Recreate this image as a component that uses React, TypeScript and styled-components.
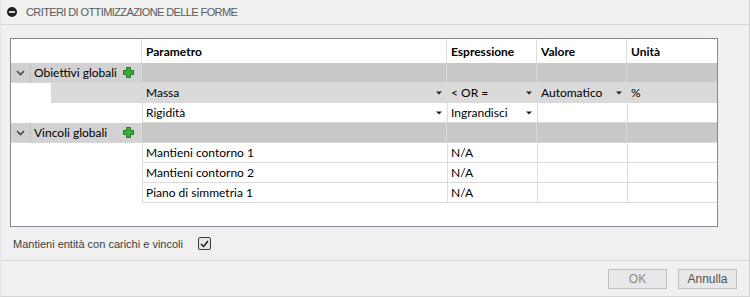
import styled, { createGlobalStyle } from "styled-components";

const GlobalStyles = createGlobalStyle`
  *{
    margin: 0;
    padding: 0;
    box-sizing: border-box;
  }
  body{
    background: #f0f0f0;
  }
`;

const COLS = "131px 305px 90px 90px 90px";

type Cell = { text?: string; drop?: boolean };
type Row = {
  kind: "group" | "child";
  label?: string;
  cells?: Cell[];
  selected?: boolean;
  indent?: boolean;
};

const rows: Row[] = [
  { kind: "group", label: "Obiettivi globali" },
  {
    kind: "child",
    selected: true,
    indent: true,
    cells: [
      { text: "Massa", drop: true },
      { text: "< OR =", drop: true },
      { text: "Automatico", drop: true },
      { text: "%" },
    ],
  },
  {
    kind: "child",
    cells: [
      { text: "Rigidità", drop: true },
      { text: "Ingrandisci", drop: true },
      {},
      {},
    ],
  },
  { kind: "group", label: "Vincoli globali" },
  { kind: "child", cells: [{ text: "Mantieni contorno 1" }, { text: "N/A" }, {}, {}] },
  { kind: "child", cells: [{ text: "Mantieni contorno 2" }, { text: "N/A" }, {}, {}] },
  { kind: "child", cells: [{ text: "Piano di simmetria 1" }, { text: "N/A" }, {}, {}] },
];

function Chevron() {
  return (
    <svg width="9" height="6" viewBox="0 0 9 6">
      <polyline points="1,1 4.5,4.5 8,1" fill="none" stroke="#4a4a4a" strokeWidth="1.6" />
    </svg>
  );
}

function Plus() {
  return (
    <svg width="11" height="11" viewBox="0 0 11 11">
      <path
        d="M3.5 0.5h4v3h3v4h-3v3h-4v-3h-3v-4h3z"
        fill="#3cab3c"
        stroke="#237a23"
        strokeWidth="1"
      />
    </svg>
  );
}

function DropArrow() {
  return (
    <svg width="6" height="4" viewBox="0 0 6 4">
      <polygon points="0,0.5 6,0.5 3,3.5" fill="#222" />
    </svg>
  );
}

function App() {
  return (
    <Frame>
      <GlobalStyles />
      <TitleBar>
        <svg width="10" height="10" viewBox="0 0 10 10">
          <circle cx="5" cy="5" r="5" fill="#222" />
          <rect x="2" y="4.2" width="6" height="1.6" fill="#fff" />
        </svg>
        <Title>CRITERI DI OTTIMIZZAZIONE DELLE FORME</Title>
      </TitleBar>
      <Body>
        <Table>
          <HeaderRow>
            <HeadCell />
            <HeadCell>Parametro</HeadCell>
            <HeadCell>Espressione</HeadCell>
            <HeadCell>Valore</HeadCell>
            <HeadCell>Unità</HeadCell>
          </HeaderRow>
          {rows.map((r, i) =>
            r.kind === "group" ? (
              <GroupRow key={i}>
                <GroupHead>
                  <Toggle>
                    <Chevron />
                  </Toggle>
                  <GroupLabel>
                    <span>{r.label}</span>
                    <Plus />
                  </GroupLabel>
                </GroupHead>
                <GroupCell />
                <GroupCell />
                <GroupCell />
                <GroupCell />
              </GroupRow>
            ) : (
              <ChildRow key={i} $selected={r.selected}>
                <Lead>{r.indent && <Indent />}</Lead>
                {r.cells!.map((c, j) => (
                  <DataCell key={j}>
                    <span>{c.text}</span>
                    {c.drop && <DropArrow />}
                  </DataCell>
                ))}
              </ChildRow>
            )
          )}
        </Table>
        <OptionRow>
          <OptionLabel>Mantieni entità con carichi e vincoli</OptionLabel>
          <CheckBox>
            <svg width="9" height="8" viewBox="0 0 9 8">
              <polyline points="1,4 3.5,6.5 8,1" fill="none" stroke="#111" strokeWidth="1.3" />
            </svg>
          </CheckBox>
        </OptionRow>
      </Body>
      <Footer>
        <Button $disabled>OK</Button>
        <Button>Annulla</Button>
      </Footer>
    </Frame>
  );
}

export default App;

const Frame = styled.div`
  width: 750px;
  height: 297px;
  background: #f0f0f0;
  border-right: 1px solid #d4d4d4;
  border-bottom: 1px solid #d4d4d4;
  border-left: 1px solid #e4e4e4;
  display: flex;
  flex-direction: column;
`;

const TitleBar = styled.div`
  height: 25px;
  border-bottom: 1px solid #d6d6d6;
  display: flex;
  align-items: center;
  gap: 9px;
  padding-left: 6px;
`;

const Title = styled.span`
  font-family: "Liberation Sans", Arial, sans-serif;
  font-size: 11px;
  color: #5a5a5a;
  letter-spacing: -0.6px;
`;

const Body = styled.div`
  padding: 13px 31px 0 9px;
`;

const Table = styled.div`
  width: 708px;
  height: 189px;
  border: 1px solid #868a92;
  background: #fff;
  font-family: Lato, "Segoe UI", sans-serif;
  font-size: 12px;
  color: #000;
`;

const HeaderRow = styled.div`
  display: grid;
  grid-template-columns: ${COLS};
  height: 24px;
`;

const HeadCell = styled.div`
  font-weight: 700;
  padding: 0 4px;
  display: flex;
  align-items: center;
  border-right: 1px solid #dcdcdc;
  &:last-child {
    border-right: none;
  }
`;

const GroupRow = styled.div`
  display: grid;
  grid-template-columns: ${COLS};
  height: 20px;
  background: #c8c8c8;
  border-bottom: 1px solid #d8d8d8;
`;

const GroupHead = styled.div`
  display: flex;
`;

const Toggle = styled.div`
  width: 20px;
  display: flex;
  align-items: center;
  justify-content: center;
  background: #d0d0d0;
  border-right: 1px solid #c0c0c0;
`;

const GroupLabel = styled.div`
  flex: 1;
  display: flex;
  align-items: center;
  justify-content: space-between;
  padding: 0 7px 0 3px;
  background: #d2d2d2;
  border-right: 1px solid #dcdcdc;
`;

const GroupCell = styled.div`
  border-right: 1px solid #d6d6d6;
  &:last-child {
    border-right: none;
  }
`;

const ChildRow = styled.div<{ $selected?: boolean }>`
  display: grid;
  grid-template-columns: ${COLS};
  height: 20px;
  & > div:not(:first-child) {
    background: ${(p) => (p.$selected ? "#dadada" : "#fff")};
    border-bottom: 1px solid #dadada;
    border-left: 1px solid #dcdcdc;
  }
`;

const Lead = styled.div`
  display: flex;
  justify-content: flex-end;
`;

const Indent = styled.div`
  width: 91px;
  background: #dadada;
`;

const DataCell = styled.div`
  display: flex;
  align-items: center;
  justify-content: space-between;
  padding: 0 5px 0 3px;
  white-space: nowrap;
`;

const OptionRow = styled.div`
  height: 33px;
  display: flex;
  align-items: center;
  padding-left: 3px;
`;

const OptionLabel = styled.span`
  font-family: "Liberation Sans", Arial, sans-serif;
  font-size: 11px;
  color: #3c3c3c;
  width: 185px;
`;

const CheckBox = styled.div`
  width: 13px;
  height: 13px;
  border: 1px solid #3a3a3a;
  border-radius: 2px;
  background: #e6e6e6;
  display: flex;
  align-items: center;
  justify-content: center;
`;

const Footer = styled.div`
  flex: 1;
  border-top: 1px solid #d6d6d6;
  display: flex;
  justify-content: flex-end;
  align-items: flex-start;
  gap: 11px;
  padding: 8px 12px 0 0;
`;

const Button = styled.button<{ $disabled?: boolean }>`
  width: 59px;
  height: 20px;
  border: 1px solid #c0c0c0;
  background: #e8e8e8;
  font-family: "Liberation Sans", Arial, sans-serif;
  font-size: 12px;
  color: ${(p) => (p.$disabled ? "#8a8a8a" : "#505050")};
`;
